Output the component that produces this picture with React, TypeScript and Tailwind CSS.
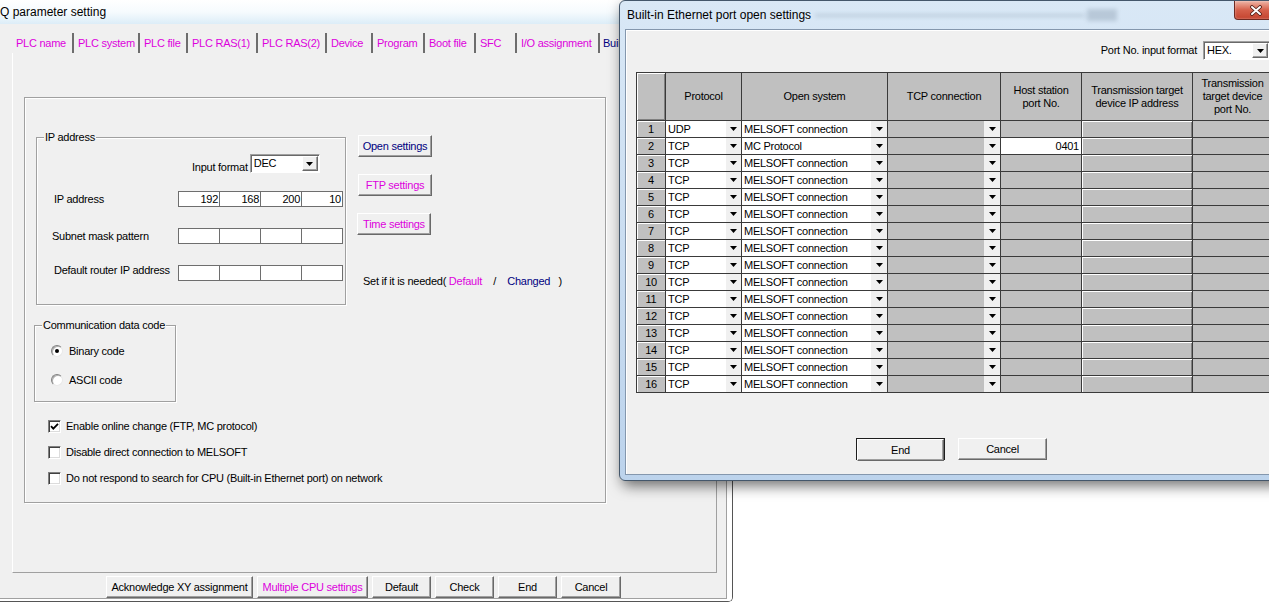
import React from 'react'

const MAG = 'text-[#dd00dd]'
const NAVY = 'text-[#000080]'
const raised =
  'bg-[#f0f0f0] border border-t-white border-l-white border-b-[#696969] border-r-[#696969] shadow-[inset_-1px_-1px_0_#a0a0a0]'
const etched = 'border border-[#a0a0a0] shadow-[inset_1px_1px_0_#fff,1px_1px_0_#fff]'
const sunken =
  'bg-white border border-t-[#a0a0a0] border-l-[#a0a0a0] border-b-white border-r-white shadow-[inset_1px_1px_0_#696969]'

const tabs = [
  { label: 'PLC name', w: 'w-[62px]' },
  { label: 'PLC system', w: 'w-[66px]' },
  { label: 'PLC file', w: 'w-[48px]' },
  { label: 'PLC RAS(1)', w: 'w-[70px]' },
  { label: 'PLC RAS(2)', w: 'w-[69px]' },
  { label: 'Device', w: 'w-[46px]' },
  { label: 'Program', w: 'w-[52px]' },
  { label: 'Boot file', w: 'w-[51px]' },
  { label: 'SFC', w: 'w-[41px]' },
  { label: 'I/O assignment', w: 'w-[83px]' },
]

const headers = [
  ['Protocol'],
  ['Open system'],
  ['TCP connection'],
  ['Host station', 'port No.'],
  ['Transmission target', 'device IP address'],
  ['Transmission', 'target device', 'port No.'],
]

const Tri = () => (
  <svg width="7" height="4" viewBox="0 0 7 4">
    <path d="M0 0h7L3.5 4z" fill="#000" />
  </svg>
)

const Btn: React.FC<{ className?: string; children: React.ReactNode }> = ({ className = '', children }) => (
  <div className={`flex h-[22px] items-center justify-center leading-none ${raised} ${className}`}>{children}</div>
)

const Select: React.FC<{ value: string; className?: string }> = ({ value, className = '' }) => (
  <div className={`flex h-[19px] ${sunken} ${className}`}>
    <span className="flex-1 pl-[3px] pt-[1px] leading-[15px]">{value}</span>
    <span className={`my-[1px] mr-[1px] flex w-[16px] items-center justify-center ${raised}`}>
      <Tri />
    </span>
  </div>
)

const Group: React.FC<{ label: string; className: string; children?: React.ReactNode }> = ({
  label,
  className,
  children,
}) => (
  <div className={`relative ${etched} ${className}`}>
    <span className="absolute left-[7px] top-[-8px] bg-[#f0f0f0] px-[1px] leading-[14px]">{label}</span>
    {children}
  </div>
)

const IpInput: React.FC<{ values?: string[] }> = ({ values = ['', '', '', ''] }) => (
  <div className="flex h-[16px] w-[165px] border border-[#6e6e6e] bg-white">
    {values.map((v, i) => (
      <div key={i} className={`flex-1 pr-[1px] text-right leading-[14px] ${i > 0 ? 'border-l border-[#6e6e6e]' : ''}`}>
        {v}
      </div>
    ))}
  </div>
)

const Radio: React.FC<{ checked?: boolean }> = ({ checked }) => (
  <span className="flex h-[12px] w-[12px] items-center justify-center rounded-full border border-t-[#808080] border-l-[#808080] border-b-[#e8e8e8] border-r-[#e8e8e8] bg-white shadow-[inset_1px_1px_0_#b0b0b0]">
    {checked && <span className="h-[4px] w-[4px] rounded-full bg-black" />}
  </span>
)

const Check: React.FC<{ checked?: boolean; label: string }> = ({ checked, label }) => (
  <div className="flex h-[16px] items-center gap-[5px]">
    <span className="flex h-[13px] w-[13px] items-center justify-center border border-t-[#808080] border-l-[#808080] border-b-white border-r-white bg-white shadow-[inset_1px_1px_0_#404040,inset_-1px_-1px_0_#dcdcdc]">
      {checked && (
        <svg width="9" height="9" viewBox="0 0 9 9">
          <path d="M1 4.2l2.3 2.4L8 1.8" fill="none" stroke="#000" strokeWidth="1.8" />
        </svg>
      )}
    </span>
    <span>{label}</span>
  </div>
)

const cols = 'grid grid-cols-[29px_76px_146px_113px_81px_111px_80px]'
const cell = 'h-[17px] border-r border-b border-[#3a3a3a]'

const rows = Array.from({ length: 16 }, (_, i) => ({
  no: i + 1,
  proto: i === 0 ? 'UDP' : 'TCP',
  open: i === 1 ? 'MC Protocol' : 'MELSOFT connection',
  port: i === 1 ? '0401' : '',
}))

const DropCell: React.FC<{ text?: string; white?: boolean; btn: string }> = ({ text, white, btn }) => (
  <div className={`flex ${cell} ${white ? 'bg-white' : 'bg-[#c0c0c0]'}`}>
    <span className="flex-1 pl-[2px] pt-[1px] leading-[15px]">{text}</span>
    <span className={`flex items-center justify-center bg-[#f0f0f0] ${btn}`}>
      <Tri />
    </span>
  </div>
)

const ParamWindow = () => (
  <div className="absolute left-0 top-0 h-[602px] w-[733px] rounded-br-[5px] border-r border-b border-[#555]">
    <div className="h-full w-full rounded-br-[4px] border-r-[5px] border-b-[2px] border-white">
      <div className="flex h-full flex-col border-r border-b border-[#a0a0a0] bg-[#f0f0f0]">
        <div className="flex h-[24px] items-center bg-linear-to-b from-white via-[#f6fbfe] to-[#dcedf8] text-[12px] tracking-normal">
          Q parameter setting
        </div>
        <div className="ml-[12px] mt-[9px] flex h-[20px]">
          {tabs.map((t) => (
            <div key={t.label} className={`flex items-center border-r-2 border-[#6d6d6d] pl-[4px] ${t.w} ${MAG}`}>
              {t.label}
            </div>
          ))}
          <div className={`flex items-center pl-[3px] whitespace-nowrap ${NAVY}`}>Built-in Ethernet port</div>
        </div>
        <div className="ml-[12px] h-[520px] w-[705px] border-r border-b border-l border-[#a0a0a0] border-l-white">
          <div className={`${etched} ml-[11px] mt-[44px] h-[406px] w-[582px]`}>
            <div className="flex items-start">
              <Group label="IP address" className="ml-[11px] mt-[39px] h-[168px] w-[310px]">
                <div className="mt-[16px] flex items-start pl-[155px]">
                  <span className="mt-[8px] leading-[11px]">Input format</span>
                  <Select value="DEC" className="ml-[2px] w-[70px]" />
                </div>
                <div className="mt-[18px] flex h-[16px] items-center">
                  <span className="w-[141px] pl-[17px]">IP address</span>
                  <IpInput values={['192', '168', '200', '10']} />
                </div>
                <div className="mt-[21px] flex h-[16px] items-center">
                  <span className="w-[141px] pl-[15px]">Subnet mask pattern</span>
                  <IpInput />
                </div>
                <div className="mt-[21px] flex h-[16px] items-center">
                  <span className="mb-[6px] w-[141px] pl-[17px] leading-[12px]">Default router IP address</span>
                  <IpInput />
                </div>
              </Group>
              <div className="ml-[12px] mt-[37px] flex flex-col items-start">
                <Btn className={`w-[74px] ${NAVY}`}>Open settings</Btn>
                <Btn className={`mt-[17px] w-[74px] ${MAG}`}>FTP settings</Btn>
                <Btn className={`-ml-[1px] mt-[17px] w-[74px] ${MAG}`}>Time settings</Btn>
                <div className="ml-[5px] mt-[40px] whitespace-pre leading-[13px]">
                  Set if it is needed( <span className={MAG}>Default</span>{'    /    '}
                  <span className={NAVY}>Changed</span>{'   )'}
                </div>
              </div>
            </div>
            <Group label="Communication data code" className="ml-[9px] mt-[20px] h-[77px] w-[142px]">
              <div className="ml-[16px] mt-[17px] flex h-[16px] items-center gap-[6px]">
                <Radio checked />
                Binary code
              </div>
              <div className="ml-[16px] mt-[13px] flex h-[16px] items-center gap-[6px]">
                <Radio />
                ASCII code
              </div>
            </Group>
            <div className="ml-[23px] mt-[16px] flex flex-col gap-[10px]">
              <Check checked label="Enable online change (FTP, MC protocol)" />
              <Check label="Disable direct connection to MELSOFT" />
              <Check label="Do not respond to search for CPU (Built-in Ethernet port) on network" />
            </div>
          </div>
        </div>
        <div className="ml-[106px] mt-[3px] flex gap-[4px]">
          <Btn className="w-[147px]">Acknowledge XY assignment</Btn>
          <Btn className={`w-[111px] ${MAG}`}>Multiple CPU settings</Btn>
          <Btn className="w-[59px]">Default</Btn>
          <Btn className="w-[59px]">Check</Btn>
          <Btn className="w-[59px]">End</Btn>
          <Btn className="w-[60px]">Cancel</Btn>
        </div>
      </div>
    </div>
  </div>
)

const OpenSettingsDialog = () => (
  <div className="absolute left-[619px] top-0 flex h-[481px] w-[665px] flex-col rounded-[6px] border border-[#44576b] bg-linear-to-b from-[#d9e8f6] to-[#bcd3ec] px-[5px] pb-[5px] shadow-[3px_5px_14px_rgba(0,0,0,0.55)]">
    <div className="relative flex h-[28px] items-center pl-[2px] text-[12px] tracking-normal">
      <span className="absolute left-[190px] top-[13px] h-[3px] w-[270px] bg-[#7c8ea0] opacity-30 blur-[2px]" />
      <span className="absolute left-[462px] top-[8px] h-[12px] w-[30px] bg-[#6f8296] opacity-30 blur-[2px]" />
      <span className="relative">Built-in Ethernet port open settings</span>
    </div>
    <div className="absolute right-[6px] top-0 flex h-[19px] w-[43px] items-center justify-center rounded-b-[4px] border border-t-0 border-[#6e2a22] bg-linear-to-b from-[#edb4a6] via-[#d5604b] to-[#c4432e] shadow-[inset_0_0_2px_rgba(255,255,255,0.6)]">
      <svg width="12" height="11" viewBox="0 0 12 11">
        <path d="M2 2l8 7M10 2l-8 7" stroke="#4a1c15" strokeWidth="3.6" strokeLinecap="round" />
        <path d="M2 2l8 7M10 2l-8 7" stroke="#fff" strokeWidth="2" strokeLinecap="round" />
      </svg>
    </div>
    <div className="flex flex-1 flex-col border border-[#8497ad] bg-[#f0f0f0] shadow-[inset_1px_1px_0_#fff]">
      <div className="mt-[11px] flex items-center justify-end gap-[6px] pr-[7px]">
        <span>Port No. input format</span>
        <Select value="HEX." className="w-[67px]" />
      </div>
      <div className={`${cols} ml-[10px] mt-[12px] border-t border-l border-[#3a3a3a]`}>
        <div className="h-[48px] border-r border-b border-[#3a3a3a] bg-[#c0c0c0] shadow-[inset_1px_1px_0_#fff,inset_-1px_-1px_0_#808080]" />
        {headers.map((h) => (
          <div
            key={h.join(' ')}
            className="flex h-[48px] flex-col items-center justify-center border-r border-b border-[#3a3a3a] bg-[#c0c0c0] text-center leading-[13px] whitespace-nowrap"
          >
            {h.map((line) => (
              <span key={line}>{line}</span>
            ))}
          </div>
        ))}
        {rows.map((r) => (
          <React.Fragment key={r.no}>
            <div className={`${cell} bg-[#c0c0c0] pt-[1px] text-center leading-[15px] shadow-[inset_1px_1px_0_#fff]`}>{r.no}</div>
            <DropCell white text={r.proto} btn="w-[15px]" />
            <DropCell white text={r.open} btn="w-[16px]" />
            <DropCell btn="w-[16px]" />
            <div className={`${cell} pr-[2px] pt-[1px] text-right leading-[15px] ${r.port ? 'bg-white' : 'bg-[#c0c0c0]'}`}>{r.port}</div>
            <div className={`${cell} bg-[#c0c0c0] shadow-[inset_1px_1px_0_#fff,inset_-1px_0_0_#808080]`} />
            <div className={`${cell} bg-[#c0c0c0]`} />
          </React.Fragment>
        ))}
      </div>
      <div className="mt-[45px] flex justify-center gap-[13px]">
        <div className="h-[22px] w-[89px] border border-[#1e1e1e]">
          <Btn className="h-[20px] w-full">End</Btn>
        </div>
        <Btn className="w-[89px]">Cancel</Btn>
      </div>
    </div>
  </div>
)

export default function App() {
  return (
    <div className="relative h-[604px] w-[1269px] overflow-hidden bg-white font-['Liberation_Sans',Arial,sans-serif] text-[11px] tracking-[-0.25px] text-black">
      <ParamWindow />
      <OpenSettingsDialog />
    </div>
  )
}
